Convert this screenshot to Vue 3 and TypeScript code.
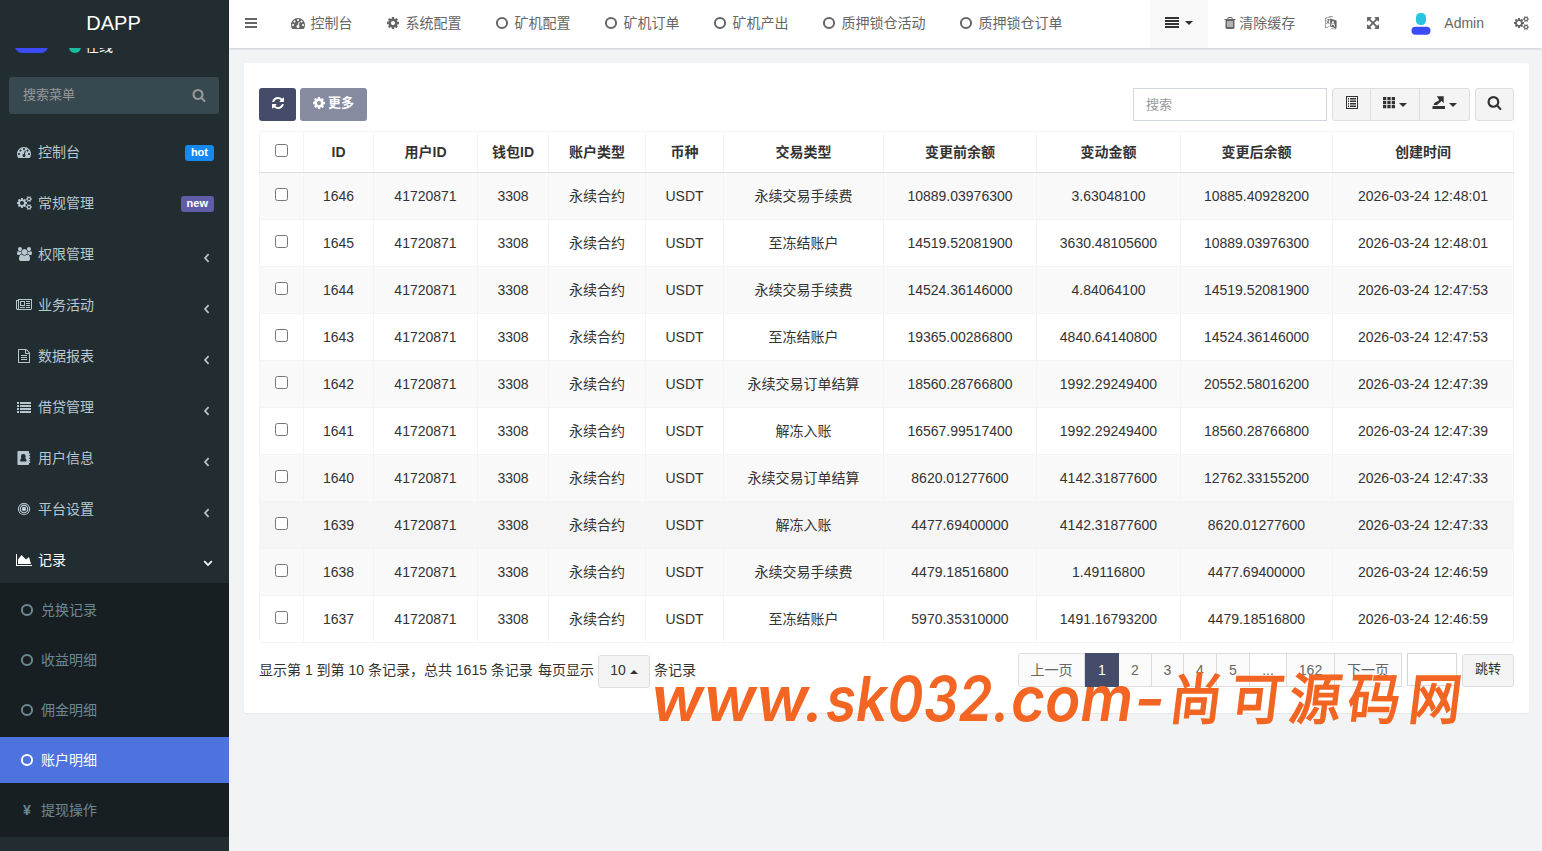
<script setup lang="ts">
import { h, type FunctionalComponent } from 'vue'

interface Glyph { w: number; d: string }

const satellite = 'v140q0 16-149 31-12 27-30 52 51 113 51 138 0 4-4 7-122 71-124 71-8 0-46-47t-52-68q-20 2-30 2t-30-2q-14 21-52 68t-46 47q-2 0-124-71-4-3-4-7 0-25 51-138-18-25-30-52-149-15-149-31v-140q0-16 149-31 13-29 30-52-51-113-51-138 0-4 4-7 4-2 35-20t59-34 30-16q8 0 46 46.5t52 67.5q20-2 30-2t30 2q51-71 92-112l6-2q4 0 124 70 4 3 4 7 0 25-51 138 17 23 30 52 149 15 149 31z'

const disc = (r: number, x = 896, y = 896): string =>
  `M${x - r} ${y}a${r} ${r} 0 1 0 ${2 * r} 0a${r} ${r} 0 1 0 ${-2 * r} 0z`

const glyphs: Record<string, Glyph> = {
  dashboard: { w: 1792, d: 'M384 1152q0-53-37.5-90.5t-90.5-37.5-90.5 37.5-37.5 90.5 37.5 90.5 90.5 37.5 90.5-37.5 37.5-90.5zm192-448q0-53-37.5-90.5t-90.5-37.5-90.5 37.5-37.5 90.5 37.5 90.5 90.5 37.5 90.5-37.5 37.5-90.5zm428 481l101-382q6-26-7.5-48.5t-38.5-29.5-48 6.5-30 39.5l-101 382q-60 5-107 43.5t-63 98.5q-20 77 20 146t117 89 146-20 89-117q16-60-6-117t-72-91zm660-33q0-53-37.5-90.5t-90.5-37.5-90.5 37.5-37.5 90.5 37.5 90.5 90.5 37.5 90.5-37.5 37.5-90.5zm-640-640q0-53-37.5-90.5t-90.5-37.5-90.5 37.5-37.5 90.5 37.5 90.5 90.5 37.5 90.5-37.5 37.5-90.5zm448 192q0-53-37.5-90.5t-90.5-37.5-90.5 37.5-37.5 90.5 37.5 90.5 90.5 37.5 90.5-37.5 37.5-90.5zm320 448q0 261-141 483-19 29-54 29h-1402q-35 0-54-29-141-221-141-483 0-182 71-348t191-286 286-191 348-71 348 71 286 191 191 286 71 348z' },
  cog: { w: 1792, d: 'M1152 896q0-106-75-181t-181-75-181 75-75 181 75 181 181 75 181-75 75-181zm512-109v222q0 12-8 23t-20 13l-185 28q-19 54-39 91 35 50 107 138 10 12 10 25t-9 23q-27 37-99 108t-94 71q-12 0-26-9l-138-108q-44 23-91 38-16 136-29 186-7 28-36 28h-222q-14 0-24.5-8.5t-11.5-21.5l-28-184q-49-16-90-37l-141 107q-10 9-25 9-14 0-25-11-126-114-165-168-7-10-7-23 0-12 8-23 15-21 51-66.5t54-70.5q-27-50-41-99l-183-27q-13-2-21-12.5t-8-23.5v-222q0-12 8-23t19-13l186-28q14-46 39-92-40-57-107-138-10-12-10-24 0-10 9-23 26-36 98.5-107.5t94.5-71.5q13 0 26 10l138 107q44-23 91-38 16-136 29-186 7-28 36-28h222q14 0 24.5 8.5t11.5 21.5l28 184q49 16 90 37l142-107q9-9 24-9 13 0 25 10 129 119 165 170 7 8 7 22 0 12-8 23-15 21-51 66.5t-54 70.5q26 50 41 98l183 28q13 2 21 12.5t8 23.5z' },
  cogs: { w: 1920, d: 'M896 896q0-106-75-181t-181-75-181 75-75 181 75 181 181 75 181-75 75-181zm768 512q0-52-38-90t-90-38-90 38-38 90q0 53 37.5 90.5t90.5 37.5 90.5-37.5 37.5-90.5zm0-1024q0-52-38-90t-90-38-90 38-38 90q0 53 37.5 90.5t90.5 37.5 90.5-37.5 37.5-90.5zm-384 421v185q0 10-7 19.5t-16 10.5l-155 24q-11 35-32 76 34 48 90 115 7 10 7 20 0 12-7 19-23 30-82.5 89.5t-78.5 59.5q-11 0-21-7l-115-90q-37 19-77 31-11 108-23 155-7 24-30 24h-186q-11 0-20-7.5t-10-17.5l-23-153q-34-10-75-31l-118 89q-7 7-20 7-11 0-21-8-144-133-144-160 0-9 7-19 10-14 41-53t47-61q-23-44-35-82l-152-24q-10-1-17-9.5t-7-19.5v-185q0-10 7-19.5t16-10.5l155-24q11-35 32-76-34-48-90-115-7-11-7-20 0-12 7-20 22-30 82-89t79-59q11 0 21 7l115 90q34-18 77-32 11-108 23-154 7-24 30-24h186q11 0 20 7.5t10 17.5l23 153q34 10 75 31l118-89q8-7 20-7 11 0 21 8 144 133 144 160 0 9-7 19-12 16-42 54t-45 60q23 48 34 82l152 23q10 2 17 10.5t7 19.5zM1920 1338' + satellite + 'M1920 314' + satellite },
  users: { w: 1920, d: 'M593 896q-162 5-265 128h-134q-82 0-138-40.5t-56-118.5q0-353 124-353 6 0 43.5 21t97.5 42.5 119 21.5q67 0 133-23-5 37-5 66 0 139 81 256zm1071 637q0 120-73 189.5t-194 69.5h-874q-121 0-194-69.5t-73-189.5q0-53 3.5-103.5t14-109 26.5-108.5 43-97.5 62-81 85.5-53.5 111.5-20q10 0 43 21.5t73 48 107 48 135 21.5 135-21.5 107-48 73-48 43-21.5q61 0 111.5 20t85.5 53.5 62 81 43 97.5 26.5 108.5 14 109 3.5 103.5zm-1024-1277q0 106-75 181t-181 75-181-75-75-181 75-181 181-75 181 75 75 181zm704 384q0 159-112.5 271.5t-271.5 112.5-271.5-112.5-112.5-271.5 112.5-271.5 271.5-112.5 271.5 112.5 112.5 271.5zm576 225q0 78-56 118.5t-138 40.5h-134q-103-123-265-128 81-117 81-256 0-29-5-66 66 23 133 23 59 0 119-21.5t97.5-42.5 43.5-21q124 0 124 353zm-128-609q0 106-75 181t-181 75-181-75-75-181 75-181 181-75 181 75 75 181z' },
  news: { w: 2048, d: 'M1024 512h-384v384h384v-384zm128 640v128h-640v-128h640zm0-768v640h-640v-640h640zm640 768v128h-512v-128h512zm0-256v128h-512v-128h512zm0-256v128h-512v-128h512zm0-256v128h-512v-128h512zm-1536 960v-960h-128v960q0 26 19 45t45 19 45-19 19-45zm1664 0v-1088h-1536v1088q0 33-11 64h1483q26 0 45-19t19-45zm128-1216v1216q0 80-56 136t-136 56h-1664q-80 0-136-56t-56-136v-1088h256v-128h1792z' },
  file: { w: 1792, d: 'M1596 380q28 28 48 76t20 88v1152q0 40-28 68t-68 28h-1344q-40 0-68-28t-28-68v-1600q0-40 28-68t68-28h896q40 0 88 20t76 48zm-444-244v376h376q-10-29-22-41l-313-313q-12-12-41-22zm384 1528v-1024h-416q-40 0-68-28t-28-68v-416h-768v1536h1280zm-1024-864q0-14 9-23t23-9h704q14 0 23 9t9 23v64q0 14-9 23t-23 9h-704q-14 0-23-9t-9-23v-64zm736 224q14 0 23 9t9 23v64q0 14-9 23t-23 9h-704q-14 0-23-9t-9-23v-64q0-14 9-23t23-9h704zm0 256q14 0 23 9t9 23v64q0 14-9 23t-23 9h-704q-14 0-23-9t-9-23v-64q0-14 9-23t23-9h704z' },
  list: { w: 1792, d: 'M0 256h256v240h-256zM384 256h1408v240h-1408zM0 640h256v240h-256zM384 640h1408v240h-1408zM0 1024h256v240h-256zM384 1024h1408v240h-1408zM0 1408h256v240h-256zM384 1408h1408v240h-1408z' },
  book: { w: 1792, d: 'M160 0h1250q130 0 130 130v190h140v220h-140v110h140v220h-140v110h140v220h-140v110h140v220h-140v132q0 130-130 130h-1250q-100 0-100-130v-1532q0-130 100-130zM470 1330h670q70 0 70-110 0-250-170-320 70-80 70-200a305 305 0 0 0-610 0q0 120 70 200-170 70-170 320 0 110 70 110z' },
  bullseye: { w: 1792, d: disc(790) + disc(660) + disc(560) + disc(400) + disc(290) },
  area: { w: 2048, d: 'M2048 1536v128h-2048v-1536h128v1408h1920zm-384-1024l256 896h-1664v-576l448-576 576 576z' },
  ring: { w: 1792, d: disc(780) + disc(520) },
  search: { w: 1792, d: 'M1216 832q0-185-131.5-316.5t-316.5-131.5-316.5 131.5-131.5 316.5 131.5 316.5 316.5 131.5 316.5-131.5 131.5-316.5zm512 832q0 52-38 90t-90 38q-54 0-90-38l-343-342q-179 124-399 124-143 0-273.5-55.5t-225-150-150-225-55.5-273.5 55.5-273.5 150-225 225-150 273.5-55.5 273.5 55.5 225 150 150 225 55.5 273.5q0 220-124 399l343 343q37 37 37 90z' },
  refresh: { w: 1792, d: 'M1639 1056q0 5-1 7-64 268-268 434.5t-478 166.5q-146 0-282.5-55t-243.5-157l-129 129q-19 19-45 19t-45-19-19-45v-448q0-26 19-45t45-19h448q26 0 45 19t19 45-19 45l-137 137q71 66 161 102t187 36q134 0 250-65t186-179q11-17 53-117 8-23 30-23h192q13 0 22.5 9.5t9.5 22.5zm25-800v448q0 26-19 45t-45 19h-448q-26 0-45-19t-19-45 19-45l138-138q-148-137-349-137-134 0-250 65t-186 179q-11 17-53 117-8 23-30 23h-199q-13 0-22.5-9.5t-9.5-22.5v-7q65-268 270-434.5t480-166.5q146 0 284 55.5t245 156.5l130-129q19-19 45-19t45 19 19 45z' },
  trash: { w: 1792, d: 'M704 1376v-704q0-14-9-23t-23-9h-64q-14 0-23 9t-9 23v704q0 14 9 23t23 9h64q14 0 23-9t9-23zm256 0v-704q0-14-9-23t-23-9h-64q-14 0-23 9t-9 23v704q0 14 9 23t23 9h64q14 0 23-9t9-23zm256 0v-704q0-14-9-23t-23-9h-64q-14 0-23 9t-9 23v704q0 14 9 23t23 9h64q14 0 23-9t9-23zm-544-992h448l-48-117q-7-9-17-11h-317q-10 2-17 11zm928 32v64q0 14-9 23t-23 9h-96v948q0 83-47 143.5t-113 60.5h-832q-66 0-113-58.5t-47-141.5v-952h-96q-14 0-23-9t-9-23v-64q0-14 9-23t23-9h309l70-167q15-37 54-63t79-26h320q40 0 79 26t54 63l70 167h309q14 0 23 9t9 23z' },
  expand: { w: 1792, d: 'M1411 541l-355 355 355 355 144-144q29-31 70-14 39 17 39 59v448q0 26-19 45t-45 19h-448q-42 0-59-40-17-39 14-69l144-144-355-355-355 355 144 144q31 30 14 69-17 40-59 40h-448q-26 0-45-19t-19-45v-448q0-42 40-59 39-17 69 14l144 144 355-355-355-355-144 144q-19 19-45 19-12 0-24-5-40-17-40-59v-448q0-26 19-45t45-19h448q42 0 59 40 17 39-14 69l-144 144 355 355 355-355-144-144q-31-30-14-69 17-40 59-40h448q26 0 45 19t19 45v448q0 42-39 59-13 5-25 5-26 0-45-19z' },
  language: { w: 1792, d: 'M130 270l760-190v80l-680 170v1130l500-150v80l-580 170zM790 320l820 240v1050l-820-260zM1090 610l-180 600 110 35 40-135 200 60 45 155 115 35-200-690zM1165 790l70 270-140-40zM300 510l200-50v-90h90v70l190-45v80l-90 30q-25 190-130 320 80 60 150 70l-40 90q-100-20-180-90-90 90-180 120l-30-90q90-30 150-100-60-80-90-190l80-20q30 90 70 140 55-90 75-230l-265 65zM930 1530q250 140 500 60l-60-70 230-10-70 210-50-60q-270 90-560-70zM560 110q210-120 430-80l180 60-40 70q-230-110-460-10z' },
  bars: { w: 1792, d: 'M128 256h1536v256h-1536zM128 768h1536v256h-1536zM128 1280h1536v256h-1536z' },
  justify: { w: 1792, d: 'M0 128h1792v256h-1792zM0 512h1792v256h-1792zM0 896h1792v256h-1792zM0 1280h1792v256h-1792z' },
  detail: { w: 1792, d: 'M128 0h1536v1664h-1536zM256 128v1408h1280v-1408zM384 256h128v192h-128zM640 256h768v192h-768zM384 576h128v192h-128zM640 576h768v192h-768zM384 896h128v192h-128zM640 896h768v192h-768zM384 1216h128v192h-128zM640 1216h768v192h-768z' },
  grid: { w: 1792, d: 'M128 128h420v420h-420zM686 128h420v420h-420zM1244 128h420v420h-420zM128 640h420v420h-420zM686 640h420v420h-420zM1244 640h420v420h-420zM128 1152h420v420h-420zM686 1152h420v420h-420zM1244 1152h420v420h-420z' },
  export: { w: 1792, d: 'M64 1280h1600v384h-1600zM620 40h880v880l-260-270-400 330-200 180h-440q20-230 230-350l460-240-30-160z' },
}

const Icon: FunctionalComponent<{ name: string; size?: number }> = (p) => {
  const g = glyphs[p.name]
  const s = p.size ?? 14
  return h('svg', { class: 'icon', viewBox: `0 0 ${g.w} 1792`, width: (g.w / 1792) * s, height: s, fill: 'currentColor', 'fill-rule': 'evenodd' }, [h('path', { d: g.d })])
}
Icon.props = ['name', 'size']

const menu = [
  { icon: 'dashboard', label: '控制台', badge: 'hot' },
  { icon: 'cogs', label: '常规管理', badge: 'new' },
  { icon: 'users', label: '权限管理' },
  { icon: 'news', label: '业务活动' },
  { icon: 'file', label: '数据报表' },
  { icon: 'list', label: '借贷管理' },
  { icon: 'book', label: '用户信息' },
  { icon: 'bullseye', label: '平台设置' },
  { icon: 'area', label: '记录', open: true },
]
const submenu = ['兑换记录', '收益明细', '佣金明细', '账户明细', '提现操作']
const tabs = [
  ['dashboard', '控制台'], ['cog', '系统配置'], ['ring', '矿机配置'], ['ring', '矿机订单'],
  ['ring', '矿机产出'], ['ring', '质押锁仓活动'], ['ring', '质押锁仓订单'],
]
const widths = [44, 70, 104, 71, 97, 78, 160, 153, 144, 152, 181]
const heads = ['ID', '用户ID', '钱包ID', '账户类型', '币种', '交易类型', '变更前余额', '变动金额', '变更后余额', '创建时间']
const fee = '永续交易手续费', freeze = '至冻结账户', settle = '永续交易订单结算', thaw = '解冻入账'
const entries: string[][] = [
  ['1646', fee, '10889.03976300', '3.63048100', '10885.40928200', '12:48:01'],
  ['1645', freeze, '14519.52081900', '3630.48105600', '10889.03976300', '12:48:01'],
  ['1644', fee, '14524.36146000', '4.84064100', '14519.52081900', '12:47:53'],
  ['1643', freeze, '19365.00286800', '4840.64140800', '14524.36146000', '12:47:53'],
  ['1642', settle, '18560.28766800', '1992.29249400', '20552.58016200', '12:47:39'],
  ['1641', thaw, '16567.99517400', '1992.29249400', '18560.28766800', '12:47:39'],
  ['1640', settle, '8620.01277600', '4142.31877600', '12762.33155200', '12:47:33'],
  ['1639', thaw, '4477.69400000', '4142.31877600', '8620.01277600', '12:47:33'],
  ['1638', fee, '4479.18516800', '1.49116800', '4477.69400000', '12:46:59'],
  ['1637', freeze, '5970.35310000', '1491.16793200', '4479.18516800', '12:46:59'],
]
const rows = entries.map(([id, type, before, change, after, time]) =>
  [id, '41720871', '3308', '永续合约', 'USDT', type, before, change, after, `2026-03-24 ${time}`])

const pages = [
  { t: '上一页', w: 66 }, { t: '1', w: 34 }, { t: '2', w: 33 }, { t: '3', w: 32 }, { t: '4', w: 33 },
  { t: '5', w: 33 }, { t: '...', w: 37 }, { t: '162', w: 48 }, { t: '下一页', w: 67 },
]
const markLatin = [
  { t: 'www.', x: 651, w: 173 }, { t: 'sk032.', x: 826, w: 184 }, { t: 'com', x: 1011, w: 122 }, { t: '-', x: 1134, w: 31 },
]
const markHan = [
  { t: '尚', x: 1168 }, { t: '可', x: 1229 }, { t: '源', x: 1287 }, { t: '码', x: 1346 }, { t: '网', x: 1407 },
]
</script>

<template>
  <div class="app">
    <aside class="side">
      <div class="logo">DAPP</div>
      <div class="user-clip">
        <i class="pill"></i><i class="online-dot"></i><span class="online">在线</span>
      </div>
      <div class="side-search"><span>搜索菜单</span><Icon name="search" /></div>
      <nav>
        <div v-for="m in menu" :key="m.label" class="item" :class="{ open: m.open }">
          <span class="item-icon"><Icon :name="m.icon" /></span>
          <span>{{ m.label }}</span>
          <b v-if="m.badge" class="badge" :class="m.badge">{{ m.badge }}</b>
          <svg v-else class="angle" width="10" height="10" viewBox="0 0 10 10">
            <path :d="m.open ? 'M1.2 3.2 5 7 8.8 3.2' : 'M6.6 1.2 3 5l3.6 3.8'" />
          </svg>
        </div>
      </nav>
      <div class="sub">
        <div v-for="s in submenu" :key="s" class="sub-item" :class="{ active: s === '账户明细' }">
          <span class="sub-icon"><b v-if="s === '提现操作'">¥</b><Icon v-else name="ring" /></span>
          <span>{{ s }}</span>
        </div>
      </div>
    </aside>

    <div class="main">
      <header class="top">
        <span class="burger"><Icon name="bars" /></span>
        <div v-for="t in tabs" :key="t[1]" class="tab">
          <span class="tab-icon" :class="t[0]"><Icon :name="t[0]" /></span>{{ t[1] }}
        </div>
        <div class="right">
          <div class="more-tabs"><Icon name="justify" /><i class="caret"></i></div>
          <div class="clear"><Icon name="trash" /><span>清除缓存</span></div>
          <Icon class="lang" name="language" />
          <Icon class="full" name="expand" />
          <svg class="avatar" width="20" height="22" viewBox="0 0 20 22">
            <rect x="5" y="0" width="10" height="12" rx="4.5" fill="#26c4e0" />
            <rect x="0.5" y="13.8" width="19" height="8" rx="4" fill="#3c4bf5" />
          </svg>
          <span class="admin">Admin</span>
          <Icon class="gear" name="cogs" />
        </div>
      </header>

      <section class="panel">
        <div class="toolbar">
          <button class="btn dark"><Icon name="refresh" /></button>
          <button class="btn dark faded"><Icon name="cog" /><b>更多</b></button>
          <div class="tools">
            <div class="search-box">搜索</div>
            <div class="group">
              <span class="g1"><Icon name="detail" /></span>
              <span class="g2"><Icon name="grid" /><i class="caret"></i></span>
              <span class="g3"><Icon name="export" /><i class="caret"></i></span>
            </div>
            <div class="find"><Icon name="search" :size="15" /></div>
          </div>
        </div>

        <table>
          <colgroup><col v-for="(w, i) in widths" :key="i" :style="{ width: w + 'px' }"></colgroup>
          <thead>
            <tr><th><i class="check"></i></th><th v-for="t in heads" :key="t">{{ t }}</th></tr>
          </thead>
          <tbody>
            <tr v-for="r in rows" :key="r[0]" :class="{ hover: r[0] === '1639' }">
              <td><i class="check"></i></td>
              <td v-for="(c, i) in r" :key="i">{{ c }}</td>
            </tr>
          </tbody>
        </table>

        <div class="foot">
          <span class="info">显示第 1 到第 10 条记录，总共 1615 条记录 <span>每页显示</span></span>
          <span class="size">10<i class="caret up"></i></span>
          <span>条记录</span>
          <div class="pager">
            <span v-for="p in pages" :key="p.t" :class="{ on: p.t === '1', gap: p.t === '...' }" :style="{ width: p.w + 'px' }">{{ p.t }}</span>
          </div>
          <div class="jump-input"></div>
          <div class="jump">跳转</div>
        </div>
      </section>
    </div>

    <svg class="mark" width="1542" height="851" viewBox="0 0 1542 851">
      <text v-for="m in markLatin" :key="m.t" class="mark-latin" :x="m.x" y="721" :textLength="m.w" lengthAdjust="spacingAndGlyphs">{{ m.t }}</text>
      <text v-for="m in markHan" :key="m.t" class="mark-han" :transform="`translate(${m.x} 719) skewX(-7) scale(0.95 1)`">{{ m.t }}</text>
    </svg>
  </div>
</template>

<style>
body { margin: 0; background: #f1f3f5; overflow: hidden; }
</style>

<style scoped>
* { box-sizing: border-box; }
.app { position: relative; display: flex; width: 1542px; height: 851px; overflow: hidden; background: #f1f3f5; color: #333; font: 14px/20px "Liberation Sans", "Noto Sans CJK SC", sans-serif; }
.icon { display: block; flex: none; }
.side { width: 229px; height: 851px; flex: none; background: #222d32; color: #b8c7ce; }
.logo { height: 48px; padding-right: 2px; line-height: 46px; text-align: center; font-size: 20px; color: #fff; }
.user-clip { position: relative; height: 29px; overflow: hidden; }
.pill { position: absolute; left: 15px; top: -9px; width: 33px; height: 14px; border-radius: 7px; background: #3c4bf5; }
.online-dot { position: absolute; left: 69px; top: -7px; width: 12px; height: 12px; border-radius: 50%; background: #18bc9c; }
.online { position: absolute; left: 85px; top: -12px; line-height: 20px; color: #fff; }
.side-search { display: flex; align-items: center; justify-content: space-between; margin: 0 10px 0 9px; height: 37px; padding: 0 13px 1px 14px; border-radius: 3px; background: #374850; color: #999; font-size: 13px; }
nav { padding-top: 13px; }
.item { display: flex; align-items: center; height: 51px; padding: 0 15px 1px 14px; }
.item.open { color: #fff; }
.item:last-child { height: 48px; padding-top: 2px; padding-bottom: 0; }
.item-icon { display: flex; width: 20px; margin-right: 4px; justify-content: center; }
.badge { margin: 2px 0 0 auto; height: 16px; padding: 0 6px; border-radius: 3px; font-size: 11px; line-height: 15px; color: #fff; }
.hot { background: #1688f1; }
.new { background: #605ca8; }
.angle { margin: 8px 2px 0 auto; fill: none; stroke: currentColor; stroke-width: 1.7; }
.open .angle { margin: 6px 1.5px 0 auto; }
.sub { display: flex; flex-direction: column; gap: 4px; padding: 4px 0; background: #181f23; color: #6c8893; }
.sub-item { display: flex; align-items: center; height: 46px; }
.sub-icon { display: flex; justify-content: center; width: 14px; margin: 0 7px 0 20px; }
.sub-item.active { background: #4e73df; color: #fff; }
.main { flex: 1; min-width: 0; }
.top { display: flex; align-items: center; height: 48px; background: #fff; box-shadow: 0 1px 2px rgba(0, 21, 41, .16); color: #666; padding-bottom: 2px; }
.burger { width: 29px; margin: 0 17.5px 0 15px; }
.tab { display: flex; align-items: center; margin-right: 34px; white-space: nowrap; }
.tab-icon { display: flex; justify-content: center; width: 12px; margin-right: 7px; }
.tab-icon.dashboard { width: 14px; margin-right: 6px; }
.right { display: flex; align-items: center; margin-left: auto; height: 48px; margin-bottom: -2px; padding-bottom: 2px; }
.more-tabs { display: flex; align-items: center; width: 58px; height: 48px; margin-bottom: -2px; padding: 0 15px 2px; background: #f9f9f9; color: #333; }
.caret { margin-left: 6px; border: 4px solid transparent; border-top-color: currentColor; border-bottom: 0; }
.clear { display: flex; align-items: center; gap: 2px; margin-left: 15px; }
.lang { margin-left: 29px; }
.full { margin-left: 28px; }
.avatar { margin: 2px 13px 0 31px; }
.gear { margin: 0 13px 0 30px; }
.panel { width: 1285px; height: 650px; margin: 15px 0 0 15px; padding: 25px 15px 0; border-radius: 3px; background: #fff; box-shadow: 0 1px 1px rgba(0, 0, 0, .05); }
.toolbar { display: flex; height: 33px; margin-bottom: 10px; }
.btn { display: flex; align-items: center; justify-content: center; width: 37px; height: 33px; padding: 0 0 3px; border: 0; border-radius: 3px; color: #fff; font: inherit; font-size: 13px; }
.dark { background: #444c69; }
.faded { width: 67px; margin-left: 4px; padding-right: 1px; gap: 2px; background: #868ba0; }
.tools { display: flex; margin-left: auto; width: 381px; }
.search-box { width: 194px; height: 33px; padding-left: 12px; line-height: 31px; border: 1px solid #d2d6de; color: #999; font-size: 13px; }
.group { display: flex; width: 138px; height: 33px; margin-left: 5px; border: 1px solid #ddd; border-radius: 3px; background: #f4f4f4; }
.group span { display: flex; align-items: center; padding-bottom: 3px; }
.group .caret { margin: 4px 0 0 3px; }
.group .g1 { width: 37px; padding-left: 12px; }
.group .g2 { width: 49px; padding-left: 11px; border-left: 1px solid #ddd; }
.group .g3 { width: 50px; padding-left: 12px; border-left: 1px solid #ddd; }
.find { display: flex; align-items: center; justify-content: center; width: 39px; height: 33px; margin-left: 5px; padding-bottom: 4px; border: 1px solid #ddd; border-radius: 3px; background: #f4f4f4; color: #333; }
table { width: 1254px; table-layout: fixed; border-collapse: collapse; }
th, td { padding: 0; border: 1px solid #f4f4f4; text-align: center; vertical-align: middle; white-space: nowrap; }
th { height: 41px; border-bottom: 1px solid #ddd; }
td { height: 47px; }
tbody tr:nth-child(odd) { background: #f9f9f9; }
tbody tr.hover { background: #f5f5f5; }
.check { display: block; width: 13px; height: 13px; margin: -3px auto 0; border: 1px solid #767676; border-radius: 2.5px; background: #fff; }
.foot { display: flex; align-items: flex-start; padding-top: 10px; line-height: 35px; white-space: nowrap; }
.info { display: flex; justify-content: space-between; width: 335px; }
.size { display: flex; align-items: center; justify-content: center; width: 52px; height: 33px; margin: 2px 4px 0; border: 1px solid #ddd; border-radius: 3px; background: #f4f4f4; padding-bottom: 2px; }
.caret.up { margin: 3px 0 0 4px; border-top: 0; border-bottom: 4px solid currentColor; }
.pager { display: flex; height: 34px; margin-left: auto; border: 1px solid #ddd; border-right: 0; color: #666; line-height: 32px; border-radius: 3px 0 0 3px; }
.pager span { border-right: 1px solid #ddd; text-align: center; background: #fafafa; }
.pager .on { margin: -1px 0; line-height: 34px; border: 0; background: #444c69; color: #fff; }
.pager .gap { background: #fff; }
.jump-input { width: 50px; height: 33px; margin-left: 5px; border: 1px solid #d2d6de; background: #fff; }
.jump { width: 52px; height: 33px; margin: 1px 0 0 5px; border: 1px solid #ddd; border-radius: 3px; background: #f4f4f4; font-size: 13px; line-height: 28px; text-align: center; }
.mark { position: absolute; left: 0; top: 0; fill: #f26522; pointer-events: none; }
.mark-latin { font: italic 600 62px Inter, sans-serif; }
.mark-han { font: 400 55px "Noto Sans CJK SC", sans-serif; stroke: #f26522; stroke-width: 1.8px; }
</style>
